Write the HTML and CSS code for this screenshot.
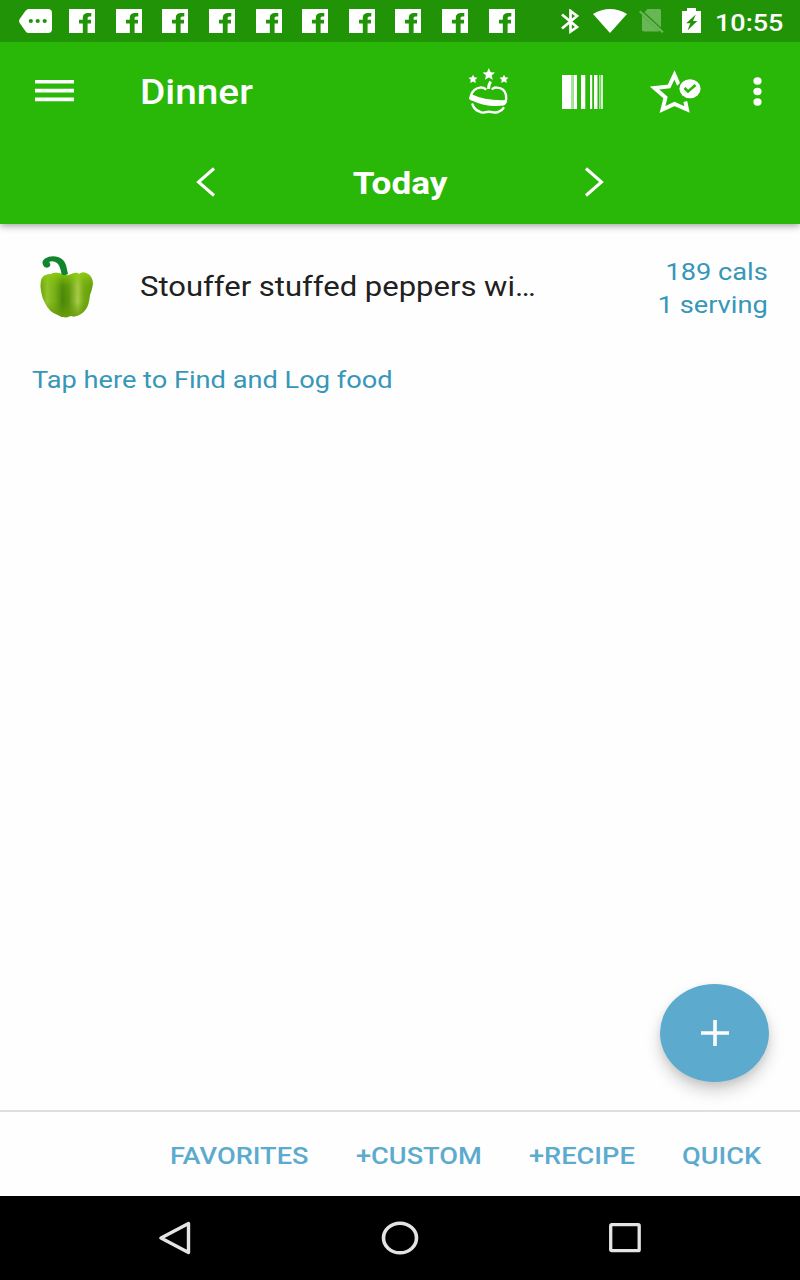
FILE: index.html
```html
<!DOCTYPE html>
<html lang="en">
<head>
<meta charset="utf-8">
<title>Dinner</title>
<link rel="stylesheet" href="styles.css">
</head>
<body>
<svg class="defs" width="0" height="0" aria-hidden="true">
  <symbol id="fb" viewBox="0 0 26 24"><path fill="#fff" d="M0 0H26V24H18.6V14.4H22V10.7H18.6V9Q18.6 7.4 20.2 7.4H22.3V3.9H18.2Q13.8 4.2 13.8 8.8V10.7H10V14.4H13.8V24H0Z"/></symbol>
</svg>
<div class="screen">
  <header class="header">
    <div class="status">
      <svg class="msg" width="33" height="24" viewBox="0 0 33 24"><path fill="#fff" d="M9.5 0H29Q33 0 33 4V20Q33 24 29 24H9.5Q7.500 24 6 21.500L.7 14Q-.5 12 .7 10L6 2.500Q7.500 0 9.500 0Z"/><g fill="#219306"><circle cx="11.800" cy="12" r="2.100"/><circle cx="18.700" cy="12" r="2.100"/><circle cx="25.700" cy="12" r="2.100"/></g></svg>
      <div class="notes">
        <svg><use href="#fb"/></svg><svg><use href="#fb"/></svg><svg><use href="#fb"/></svg><svg><use href="#fb"/></svg><svg><use href="#fb"/></svg><svg><use href="#fb"/></svg><svg><use href="#fb"/></svg><svg><use href="#fb"/></svg><svg><use href="#fb"/></svg><svg><use href="#fb"/></svg>
      </div>
      <div class="system">
        <svg width="18" height="25" viewBox="0 0 18 25"><path fill="none" stroke="#fff" stroke-width="2.700" d="M1 5.500L16 18L9.500 22.500V2L16 7L1 19.500"/></svg>
        <svg width="34" height="24" viewBox="0 0 34 24"><path fill="#fff" d="M0 5Q17-5 34 5L17 24Z"/></svg>
        <svg width="25" height="24" viewBox="0 0 25 24"><g fill="#69b656"><path d="M8.500 0H20Q22 0 22 2V18.200L5.500 3.200Z"/><path d="M3 6V20.500Q3 22.500 5 22.500H20Z"/><path d="M3 6L20 22.500L22 20V18.200L5.500 3.200Z"/></g><path stroke="#219306" stroke-width="1.400" d="M2.500 1.500L24 21.500"/><path stroke="#69b656" stroke-width="2.100" d="M.7 2.200L24 23.300"/></svg>
        <svg width="19" height="25" viewBox="0 0 19 25"><path fill="#fff" d="M0 3H5V0H14V3H19V25H0Z"/><path fill="#219306" d="M13.800 6.500L4.200 15.300H8.300L5.500 22.500L15.300 13H11Z"/></svg>
        <span class="clock">10:55</span>
      </div>
    </div>
    <div class="toolbar">
      <svg class="menu" width="39" height="22" viewBox="0 0 39 22"><path fill="#fff" d="M0 0H39V3.600H0ZM0 8.800H39V12.400H0ZM0 17.600H39V21.200H0Z"/></svg>
      <h1 class="title">Dinner</h1>
      <svg class="apple" width="42" height="48" viewBox="0 0 42 48"><g fill="#fff"><path d="M20.800 0L22.700 4.200L27 4.600L23.700 7.500L24.800 11.800L20.800 9.600L16.900 11.800L18 7.500L14.700 4.600L19 4.200Z"/><path d="M5 6.700L6.300 9.300L9.500 9.700L7.200 11.700L7.800 14.900L5 13.400L2.200 14.900L2.800 11.700L.5 9.700L3.700 9.300Z"/><path d="M36 6.700L37.300 9.300L40.500 9.700L38.200 11.700L38.800 14.900L36 13.400L33.200 14.900L33.800 11.700L31.500 9.700L34.700 9.300Z"/><path d="M1 30Q1.800 27 3.500 26.200Q18 33 38.500 32Q39 36 36 37.500Q18 39.500 5 32.900Q1 32 1 30Z"/></g><path fill="none" stroke="#fff" stroke-width="2.400" stroke-linecap="round" d="M3 27.500Q5 20.500 12 19.600Q15 19.200 17.500 21M24.500 20.700Q27 19.300 29 19.600Q36.500 20 38 27Q38.600 31 37.500 34M4.500 36.500Q6.500 42 11.500 43.500Q14 45.200 16.500 44.300Q21 43.300 25.500 44.300Q29 45 31 43.500Q34.500 42 35.500 40"/><path fill="none" stroke="#fff" stroke-width="2.900" d="M20.500 21Q20.400 17 22.600 13.500"/></svg>
      <svg class="barcode" width="41" height="34" viewBox="0 0 41 34"><path fill="#fff" d="M0 0H9V34H0ZM11.500 0H15V34H11.500ZM19 0H23.300V34H19ZM28 0H30.200V34H28ZM32 0H35.500V34H32ZM39.200 0H40.800V34H39.200Z"/><path fill="#a8e39b" d="M9 0H11.500V34H9ZM37 0H38.600V34H37Z"/></svg>
      <svg class="star" width="51" height="44" viewBox="0 0 51 44"><path fill="none" stroke="#fff" stroke-width="3.900" d="M29 11.500L27.800 12.500L24.500 5L19 16.500L4.500 18L15.500 27.500L12.500 39.500L24.500 34L37 39.500L35.300 31.500"/><circle cx="39.700" cy="18.700" r="11.300" fill="#29b708"/><ellipse cx="40" cy="18.700" rx="10.600" ry="9.500" fill="#fff"/><path fill="none" stroke="#29b708" stroke-width="2.600" d="M34.500 18L38 21.500L45.500 15"/></svg>
      <svg class="more" width="9" height="30" viewBox="0 0 9 30"><g fill="#fff"><ellipse cx="4.500" cy="4" rx="4.100" ry="3.700"/><ellipse cx="4.500" cy="14.500" rx="4.100" ry="3.700"/><ellipse cx="4.500" cy="25" rx="4.100" ry="3.700"/></g></svg>
    </div>
    <div class="datebar">
      <svg width="20" height="30" viewBox="0 0 20 30"><path fill="none" stroke="#fff" stroke-width="3" d="M18 1.500L2.500 15L18 28.500"/></svg>
      <span class="today">Today</span>
      <svg width="20" height="30" viewBox="0 0 20 30"><path fill="none" stroke="#fff" stroke-width="3" d="M2 1.500L17.500 15L2 28.500"/></svg>
    </div>
  </header>
  <main class="content">
    <div class="food">
      <svg class="pepper" width="54" height="63" viewBox="0 0 54 63">
        <defs>
          <linearGradient id="skin"><stop offset="0" stop-color="#69a50c"/><stop offset=".13" stop-color="#93c52a"/><stop offset=".28" stop-color="#74ae17"/><stop offset=".42" stop-color="#4b860a"/><stop offset=".54" stop-color="#5c960c"/><stop offset=".71" stop-color="#a8cd4a"/><stop offset=".83" stop-color="#73aa10"/><stop offset="1" stop-color="#619b0c"/></linearGradient>
          <linearGradient id="shade" x2="0" y2="1"><stop offset="0" stop-color="#8dce0d" stop-opacity=".95"/><stop offset=".3" stop-color="#82bb12" stop-opacity=".15"/><stop offset=".65" stop-color="#609b09" stop-opacity="0"/><stop offset="1" stop-color="#6b9e0c" stop-opacity=".95"/></linearGradient>
          <path id="body" d="M1 24Q3 18 11 18Q17 15 23 19Q29 20 33 17.500Q37 16 39 18Q42 15.500 46 17Q53 20 53 28Q52 34 50 39Q49 49 46 53Q41 60 34 60.500Q30 59.500 28 61Q22 62 18 59Q9 56 5 47Q2 42 1 35Q0 30 1 24Z"/>
        </defs>
        <use href="#body" fill="url(#skin)"/><use href="#body" fill="url(#shade)"/>
        <path fill="#10852b" d="M10 10Q8 13 4.500 11Q0 6 5 2.500Q11-1 18 1Q24 3 26 9L28 18Q25 20 21.500 18.500Q20.500 10 17 7Q13 4 9 6Q11 8 10 10Z"/>
      </svg>
      <div class="name"><span>Stouffer stuffed peppers wi…</span></div>
      <div class="amount"><span class="cals">189 cals</span><span class="serving">1 serving</span></div>
    </div>
    <a class="hint">Tap here to Find and Log food</a>
  </main>
  <button class="fab" aria-label="Add food"><svg width="28" height="26" viewBox="0 0 28 26"><path stroke="#fff" stroke-width="3.600" d="M0 13H28M14 0V26"/></svg></button>
  <footer class="actions"><span class="fav">FAVORITES</span><span class="custom">+CUSTOM</span><span class="recipe">+RECIPE</span><span class="quick">QUICK</span></footer>
  <nav class="nav">
    <svg width="32" height="34" viewBox="0 0 32 34"><path fill="none" stroke="#e4e4e4" stroke-width="3.400" stroke-linejoin="round" d="M29.500 2.500V31.500L2 17Z"/></svg>
    <svg width="38" height="34" viewBox="0 0 38 34"><ellipse cx="19" cy="17" rx="16.500" ry="14.800" fill="none" stroke="#e4e4e4" stroke-width="3.600"/></svg>
    <svg width="32" height="30" viewBox="0 0 32 30"><rect x="1.700" y="1.700" width="28.500" height="26" rx="1" fill="none" stroke="#e4e4e4" stroke-width="3.300"/></svg>
  </nav>
</div>
</body>
</html>
```
FILE: styles.css
```css
* { box-sizing: border-box; }
body { margin: 0; background: #fefefe; font-family: Roboto, sans-serif; }
svg { display: block; flex: none; }
.defs { position: absolute; }
.screen { position: relative; width: 800px; height: 1280px; display: flex; flex-direction: column; overflow: hidden; }
.header { height: 224px; flex: none; background: #29b708; box-shadow: 0 2px 7px rgba(0,0,0,.36); color: #fff; }
.status { height: 42px; background: #219306; display: flex; align-items: flex-start; padding: 9px 0 0 19px; }
.notes { display: flex; gap: 20.650px; margin-left: 17px; }
.notes svg { width: 26px; height: 24px; }
.system { display: flex; align-items: flex-start; margin-left: 46.500px; }
.system svg:nth-child(2) { margin-left: 14px; }
.system svg:nth-child(3) { margin-left: 12px; }
.system svg:nth-child(4) { margin: -1px 0 0 17.500px; }
/* Labels use a slightly expanded Roboto. */
span, h1, .hint { display: block; white-space: nowrap; transform: scaleX(1.115); transform-origin: left center; }
.clock { font-size: 24.300px; font-weight: 500; line-height: 30px; margin: -1px 0 0 14.500px; transform: scaleX(1.11); }
.toolbar { height: 98px; display: flex; align-items: flex-start; padding: 37.500px 0 0 35px; }
.title { width: 328px; margin: -6.500px 0 0 66px; font-size: 35px; font-weight: 500; line-height: 40px; transform: scaleX(1.108); }
.apple { margin-top: -11.500px; }
.barcode { margin: -4.500px 0 0 52px; }
.star { margin: -10px 0 0 47px; }
.more { margin: -3px 0 0 51.700px; }
.datebar { height: 84px; display: flex; justify-content: space-between; padding: 27px 196px 0; }
.today { font-size: 32px; font-weight: 700; line-height: 32px; transform: scaleX(1.1); transform-origin: center; }
.content { flex: 1; padding: 32px 32px 0; }
.food { display: flex; height: 98px; }
.pepper { margin-left: 8px; }
.name { width: 459px; margin: 13px 0 0 46px; font-size: 28px; line-height: 36px; color: #212121; }
.name span { transform: scaleX(1.107); }
.amount { flex: 1; color: #3797b8; font-size: 24.400px; line-height: 33px; display: flex; flex-direction: column; align-items: flex-end; margin-top: -1px; }
.amount span { transform-origin: right center; }
.hint { color: #3797b8; font-size: 24.400px; line-height: 30px; margin-top: 11px; }
.fab { position: absolute; left: 660px; top: 984px; width: 109px; height: 98px; border: 0; border-radius: 50%; background: #5cabcf; display: grid; place-items: center; padding: 0; box-shadow: 0 9px 16px rgba(0,0,0,.18), 0 3px 7px rgba(0,0,0,.08); }
.actions { height: 86px; flex: none; border-top: 2px solid #dfdfdf; display: grid; grid-template-columns: 186px 173px 153px 100px; padding: 29px 0 0 170px; color: #5cabcf; font-size: 24.400px; font-weight: 500; line-height: 30px; }
.nav { height: 84px; flex: none; background: #000; display: flex; align-items: center; justify-content: space-between; padding: 0 159px; }
```
